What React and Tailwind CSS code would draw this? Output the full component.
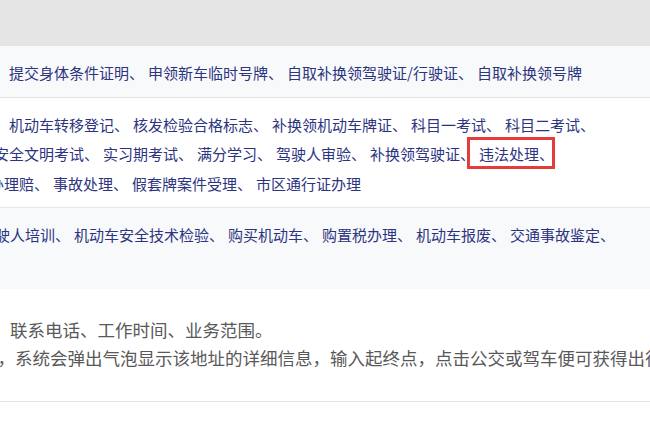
const LINK = 'text-[#2c3480]'

function Item({ children, boxed }) {
  if (boxed) {
    return (
      <span className={`relative ${LINK}`}>
        {children}
        <span className="absolute -left-[12px] -right-[1px] -top-[6px] -bottom-[3px] border-[3px] border-[#e43c3a]" />
      </span>
    )
  }
  return <span className={LINK}>{children}</span>
}

function Line({ items, offset, boxed }) {
  return (
    <div className={`flex gap-[4px] whitespace-nowrap h-[29.5px] items-center ${offset}`}>
      {items.map(t => (
        <Item key={t} boxed={t === boxed}>{t}</Item>
      ))}
    </div>
  )
}

export default function App() {
  return (
    <div
      className="w-[650px] h-[447px] overflow-hidden bg-white text-[15px]"
      style={{ fontFamily: '"Noto Sans CJK SC", "Microsoft YaHei", sans-serif' }}
    >
      {/* header band */}
      <div className="h-[46px] bg-[#e5e5e5]" />

      {/* row 1 */}
      <div className="h-[52px] bg-[#f8f9fb] border-b border-[#e4e4e4] pt-[12px]">
        <Line
          offset="ml-[9px]"
          items={['提交身体条件证明、', '申领新车临时号牌、', '自取补换领驾驶证/行驶证、', '自取补换领号牌']}
        />
      </div>

      {/* row 2 */}
      <div className="h-[110px] bg-white border-b border-[#e8e8e8] pt-[12px]">
        <Line
          offset="ml-[9px]"
          items={['机动车转移登记、', '核发检验合格标志、', '补换领机动车牌证、', '科目一考试、', '科目二考试、']}
        />
        <Line
          offset="-ml-[6px]"
          boxed="违法处理、"
          items={['安全文明考试、', '实习期考试、', '满分学习、', '驾驶人审验、', '补换领驾驶证、', '违法处理、']}
        />
        <Line
          offset="-ml-[11px]"
          items={['办理赔、', '事故处理、', '假套牌案件受理、', '市区通行证办理']}
        />
      </div>

      {/* row 3 */}
      <div className="h-[81px] bg-[#f8f9fb] pt-[12px]">
        <Line
          offset="-ml-[5px]"
          items={['驶人培训、', '机动车安全技术检验、', '购买机动车、', '购置税办理、', '机动车报废、', '交通事故鉴定、']}
        />
      </div>

      {/* description */}
      <div className="h-[113px] border-b border-[#e5e5e5] pt-[27px] text-[17.5px] text-[#595959] leading-[28px] whitespace-nowrap">
        <div className="ml-[10px]">联系电话、工作时间、业务范围。</div>
        <div className="-ml-[2.5px]">，系统会弹出气泡显示该地址的详细信息，输入起终点，点击公交或驾车便可获得出行路线。</div>
      </div>
    </div>
  )
}
